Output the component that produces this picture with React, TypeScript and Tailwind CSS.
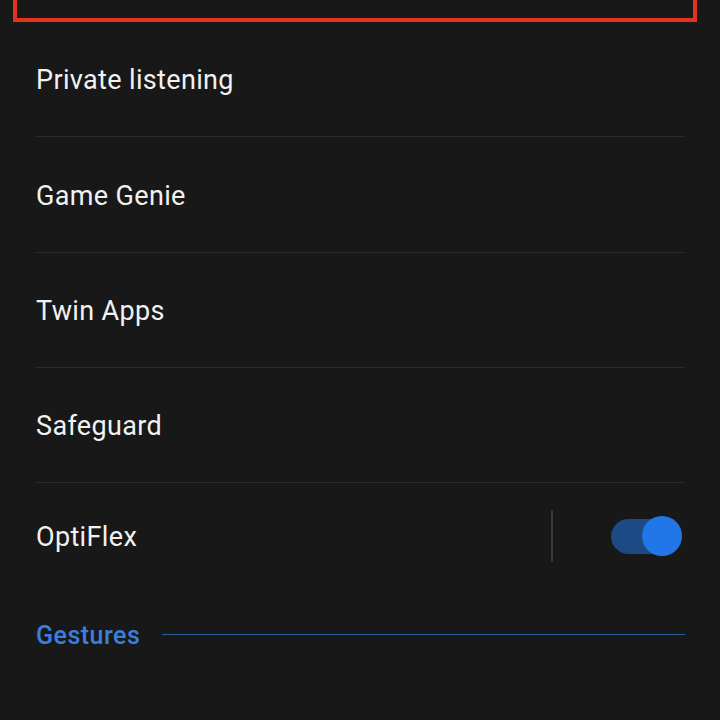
export default function App() {
  const rows = ['Private listening', 'Game Genie', 'Twin Apps', 'Safeguard'];

  return (
    <div
      className="h-[720px] w-[720px] overflow-hidden bg-[#181818] text-[#f1f1f1]"
      style={{ fontFamily: 'Roboto, "Noto Sans", sans-serif' }}
    >
      {/* highlighted item above, scrolled mostly out of view */}
      <div className="-mt-[20px] ml-[13px] h-[42px] w-[684px] border-[4.5px] border-[#e1331d]" />

      <div className="px-[35px]">
        {rows.map((label) => (
          <div
            key={label}
            className="flex h-[115.3px] items-center border-b border-[#2b2b2b] pl-px pt-[3px] text-[27px] tracking-[0.35px]"
          >
            {label}
          </div>
        ))}

        <div className="flex h-[106px] items-center pl-px text-[27px] tracking-[0.35px]">
          <span className="flex-1 pt-[3px]">OptiFlex</span>
          <span className="mr-[58px] h-[52px] w-[2px] bg-[#383838]" />
          <button className="relative mr-[4px] h-[35px] w-[70px] rounded-full bg-[#1c4a85]">
            <span className="absolute -right-[1px] top-1/2 h-[40px] w-[40px] -translate-y-1/2 rounded-full bg-[#2277e8]" />
          </button>
        </div>

        <div className="mt-[28px] flex items-center gap-[22px] pl-px">
          <span className="text-[25px] font-medium tracking-[0.5px] text-[#3a7fdd]">Gestures</span>
          <span className="mt-[-3px] h-[1.5px] flex-1 bg-[#2c5c9e]" />
        </div>
      </div>
    </div>
  );
}
